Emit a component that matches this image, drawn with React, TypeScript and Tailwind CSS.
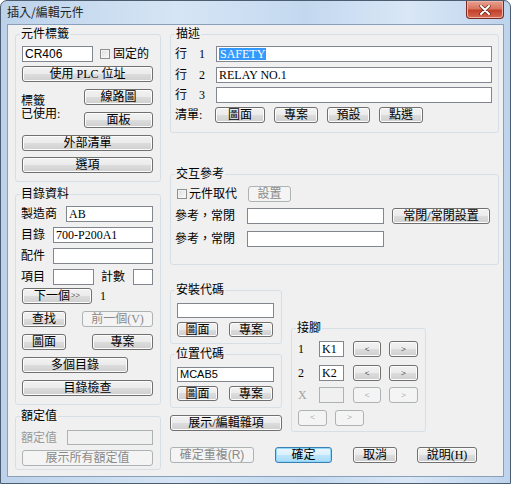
import React from "react";
import { twMerge } from "tailwind-merge";

type BtnProps = {
  className?: string;
  disabled?: boolean;
  def?: boolean;
  children?: React.ReactNode;
};

const Btn = ({ className = "", disabled, def, children }: BtnProps) => (
  <div
    className={twMerge(
      "flex shrink-0 items-center justify-center h-[16px] rounded-[3px] border text-[12px] leading-none",
      disabled
        ? "border-[#adb2b5] bg-[#f4f4f4] text-[#8a8a8a]"
        : def
        ? "border-[#3c7fb1] bg-[linear-gradient(#eaf6fd_0%,#d9f0fc_50%,#bee6fd_50%,#a7d9f5_100%)] shadow-[inset_0_0_0_1px_#8fd6fb] text-black"
        : "border-[#707070] bg-[linear-gradient(#f2f2f2_0%,#ebebeb_50%,#dddddd_50%,#cfcfcf_100%)] shadow-[inset_0_0_0_1px_#fcfcfc] text-black",
      className
    )}
  >
    {children}
  </div>
);

type FieldProps = {
  className?: string;
  value?: string;
  disabled?: boolean;
  selected?: boolean;
};

const Field = ({ className = "", value = "", disabled, selected }: FieldProps) => (
  <div
    className={twMerge(
      "flex shrink-0 items-center h-[16px] border px-[2px] text-[12px] leading-none overflow-hidden",
      disabled ? "border-[#adb2b5] bg-[#f0f0f0]" : "border-[#82878f] bg-white",
      className
    )}
  >
    {selected ? <span className="bg-[#3399ff] text-white px-[1px]">{value}</span> : value}
  </div>
);

const Check = () => (
  <div className="w-[10px] h-[10px] shrink-0 border border-[#8e8f8f] bg-[linear-gradient(135deg,#dcdcdc,#fbfbfb)] shadow-[inset_0_0_0_1px_#f4f4f4]" />
);

type GroupProps = { title: string; className?: string; children?: React.ReactNode };

const Group = ({ title, className = "", children }: GroupProps) => (
  <div className={twMerge("relative shrink-0 border border-[#d5dfe5] rounded-[3px] flex flex-col", className)}>
    <span className="absolute left-[4px] top-[-8px] bg-[#f0f0f0] px-[1px] text-[12px] leading-[14px]">
      {title}
    </span>
    {children}
  </div>
);

export default function App() {
  return (
    <div className="w-[511px] h-[484px] overflow-hidden bg-white">
      <div className="w-[511px] h-[484px] flex flex-col rounded-t-[7px] border border-[#4c5d72] bg-[linear-gradient(90deg,#bcd2ea_0%,#d6e5f5_35%,#c3d8ef_60%,#d9e7f6_80%,#bdd3ec_100%)] font-['Liberation_Serif','Noto_Sans_CJK_TC',serif] text-black">
        {/* Title bar */}
        <div className="h-[23px] flex justify-between shrink-0">
          <div className="pl-[6px] pt-[4px] text-[12px] leading-[14px] font-['Noto_Sans_CJK_TC',sans-serif] text-[#1e1e1e]">
            插入/編輯元件
          </div>
          <div className="mr-[6px] w-[38px] h-[18px] rounded-b-[4px] border border-t-0 border-[#7a2a22] bg-[linear-gradient(#e8a192_0%,#d9755f_45%,#c4402a_55%,#d36a52_100%)] flex items-center justify-center shadow-[inset_0_0_0_1px_#eeb3a5]">
            <svg width="12" height="10" viewBox="0 0 12 10">
              <path d="M2 1 L10 9 M10 1 L2 9" stroke="#5a1d14" strokeWidth="3.2" strokeLinecap="round" />
              <path d="M2 1 L10 9 M10 1 L2 9" stroke="#ffffff" strokeWidth="2" strokeLinecap="round" />
            </svg>
          </div>
        </div>

        {/* Client area */}
        <div className="ml-[6px] w-[497px] h-[453px] border border-[#8aa0ba] bg-[#f0f0f0] flex pl-[7px] pt-[9px]">
          {/* Left column */}
          <div className="w-[146px] flex flex-col">
            <Group title="元件標籤" className="h-[148px] pl-[6px]">
              <div className="mt-[11px] flex items-center">
                <Field className="w-[71px] font-['Liberation_Sans',sans-serif]" value="CR406" />
                <div className="ml-[7px]">
                  <Check />
                </div>
                <span className="ml-[3px] text-[12px] leading-none">固定的</span>
              </div>
              <Btn className="mt-[4px] w-[131px]">使用 PLC 位址</Btn>
              <div className="mt-[7px] flex">
                <div className="w-[62px] -ml-[1px] mt-[6px] text-[12px] leading-[13px]">
                  <div>標籤</div>
                  <div>已使用:</div>
                </div>
                <div className="flex flex-col gap-[7px] ml-[1px]">
                  <Btn className="w-[69px]">線路圖</Btn>
                  <Btn className="w-[69px]">面板</Btn>
                </div>
              </div>
              <Btn className="mt-[7px] w-[131px]">外部清單</Btn>
              <Btn className="mt-[6px] w-[131px]">選項</Btn>
            </Group>

            <Group title="目錄資料" className="mt-[12px] h-[211px] pl-[5px]">
              <div className="mt-[11px] flex items-center text-[12px] leading-none">
                <span className="w-[45px]">製造商</span>
                <Field className="w-[87px]" value="AB" />
              </div>
              <div className="mt-[5px] flex items-center text-[12px] leading-none">
                <span className="w-[32px]">目錄</span>
                <Field className="w-[100px]" value="700-P200A1" />
              </div>
              <div className="mt-[5px] flex items-center text-[12px] leading-none">
                <span className="w-[32px]">配件</span>
                <Field className="w-[100px]" />
              </div>
              <div className="mt-[5px] flex items-center text-[12px] leading-none">
                <span className="w-[32px]">項目</span>
                <Field className="w-[41px]" />
                <span className="ml-[7px] w-[32px]">計數</span>
                <Field className="w-[20px]" />
              </div>
              <div className="mt-[3px] flex items-center ml-[1px]">
                <Btn className="w-[70px]">
                  下一個<span className="text-[8px] ml-[1px]">&gt;&gt;</span>
                </Btn>
                <span className="ml-[8px] text-[12px] leading-none">1</span>
              </div>
              <div className="mt-[7px] flex ml-[1px]">
                <Btn className="w-[44px]">查找</Btn>
                <Btn className="ml-[16px] w-[71px]" disabled>
                  前一個(V)
                </Btn>
              </div>
              <div className="mt-[7px] flex ml-[1px]">
                <Btn className="w-[44px]">圖面</Btn>
                <Btn className="ml-[26px] w-[61px]">專案</Btn>
              </div>
              <Btn className="mt-[7px] ml-[1px] w-[106px]">多個目錄</Btn>
              <Btn className="mt-[7px] ml-[1px] w-[131px]">目錄檢查</Btn>
            </Group>

            <Group title="額定值" className="mt-[11px] h-[54px] pl-[5px]">
              <div className="mt-[13px] flex items-center text-[12px] leading-none">
                <span className="w-[46px] text-[#9a9a9a]">額定值</span>
                <Field className="w-[86px] h-[15px]" disabled />
              </div>
              <Btn className="mt-[5px] ml-[1px] w-[131px]" disabled>
                展示所有額定值
              </Btn>
            </Group>
          </div>

          {/* Right column */}
          <div className="ml-[9px] w-[329px] flex flex-col">
            <Group title="描述" className="h-[99px] pl-[4px]">
              <div className="mt-[11px] flex items-center text-[12px] leading-none">
                <span className="w-[41px]">
                  行<span className="ml-[12px]">1</span>
                </span>
                <Field className="w-[276px]" value="SAFETY" selected />
              </div>
              <div className="mt-[5px] flex items-center text-[12px] leading-none">
                <span className="w-[41px]">
                  行<span className="ml-[12px]">2</span>
                </span>
                <Field className="w-[276px]" value="RELAY NO.1" />
              </div>
              <div className="mt-[4px] flex items-center text-[12px] leading-none">
                <span className="w-[41px]">
                  行<span className="ml-[12px]">3</span>
                </span>
                <Field className="w-[276px]" />
              </div>
              <div className="mt-[4px] flex items-center text-[12px] leading-none">
                <span className="w-[40px]">清單:</span>
                <Btn className="w-[50px]">圖面</Btn>
                <Btn className="ml-[9px] w-[44px]">專案</Btn>
                <Btn className="ml-[9px] w-[43px]">預設</Btn>
                <Btn className="ml-[9px] w-[44px]">點選</Btn>
              </div>
            </Group>

            <Group title="交互參考" className="mt-[41px] h-[91px] pl-[4px]">
              <div className="mt-[11px] flex items-center text-[12px] leading-none">
                <div className="w-[73px] flex items-center pl-[2px]">
                  <Check />
                  <span className="ml-[2px]">元件取代</span>
                </div>
                <Btn className="w-[43px]" disabled>
                  設置
                </Btn>
              </div>
              <div className="mt-[6px] flex items-center text-[12px] leading-none">
                <span className="w-[72px]">參考，常閉</span>
                <Field className="w-[137px]" />
                <Btn className="ml-[8px] w-[98px]">常閉/常閉設置</Btn>
              </div>
              <div className="mt-[7px] flex items-center text-[12px] leading-none">
                <span className="w-[72px]">參考，常閉</span>
                <Field className="w-[137px]" />
              </div>
            </Group>

            <div className="mt-[25px] flex">
              <div className="w-[112px] flex flex-col">
                <Group title="安裝代碼" className="h-[54px] pl-[6px]">
                  <Field className="mt-[12px] w-[97px] h-[15px]" />
                  <div className="mt-[4px] flex">
                    <Btn className="w-[41px] h-[15px]">圖面</Btn>
                    <Btn className="ml-[11px] w-[44px] h-[15px]">專案</Btn>
                  </div>
                </Group>
                <Group title="位置代碼" className="mt-[10px] h-[54px] pl-[6px]">
                  <Field className="mt-[12px] w-[97px] h-[15px] font-['Liberation_Sans',sans-serif] text-[11px]" value="MCAB5" />
                  <div className="mt-[4px] flex">
                    <Btn className="w-[41px] h-[15px]">圖面</Btn>
                    <Btn className="ml-[11px] w-[44px] h-[15px]">專案</Btn>
                  </div>
                </Group>
                <Btn className="mt-[7px] w-[112px]">展示/編輯雜項</Btn>
              </div>

              <Group title="接腳" className="ml-[9px] mt-[38px] w-[135px] h-[104px] pl-[6px]">
                <div className="mt-[12px] flex items-center text-[12px] leading-none">
                  <span className="w-[21px]">1</span>
                  <Field className="w-[25px]" value="K1" />
                  <Btn className="ml-[9px] w-[28px] text-[9px]">&lt;</Btn>
                  <Btn className="ml-[8px] w-[29px] text-[9px]">&gt;</Btn>
                </div>
                <div className="mt-[8px] flex items-center text-[12px] leading-none">
                  <span className="w-[21px]">2</span>
                  <Field className="w-[25px]" value="K2" />
                  <Btn className="ml-[9px] w-[28px] text-[9px]">&lt;</Btn>
                  <Btn className="ml-[8px] w-[29px] text-[9px]">&gt;</Btn>
                </div>
                <div className="mt-[6px] flex items-center text-[12px] leading-none">
                  <span className="w-[21px] text-[#a0a0a0]">X</span>
                  <Field className="w-[25px]" disabled />
                  <Btn className="ml-[9px] w-[28px] text-[9px]" disabled>
                    &lt;
                  </Btn>
                  <Btn className="ml-[8px] w-[29px] text-[9px]" disabled>
                    &gt;
                  </Btn>
                </div>
                <div className="mt-[7px] flex items-center">
                  <Btn className="w-[29px] text-[9px]" disabled>
                    &lt;
                  </Btn>
                  <Btn className="ml-[8px] w-[29px] text-[9px]" disabled>
                    &gt;
                  </Btn>
                </div>
              </Group>
            </div>

            <div className="mt-[15px] flex">
              <Btn className="w-[84px] font-['Liberation_Sans','Noto_Sans_CJK_TC',sans-serif]" disabled>
                確定重複(R)
              </Btn>
              <Btn className="ml-[21px] w-[57px]" def>
                確定
              </Btn>
              <Btn className="ml-[21px] w-[44px]">取消</Btn>
              <Btn className="ml-[20px] w-[60px]">說明(H)</Btn>
            </div>
          </div>
        </div>
      </div>
    </div>
  );
}
